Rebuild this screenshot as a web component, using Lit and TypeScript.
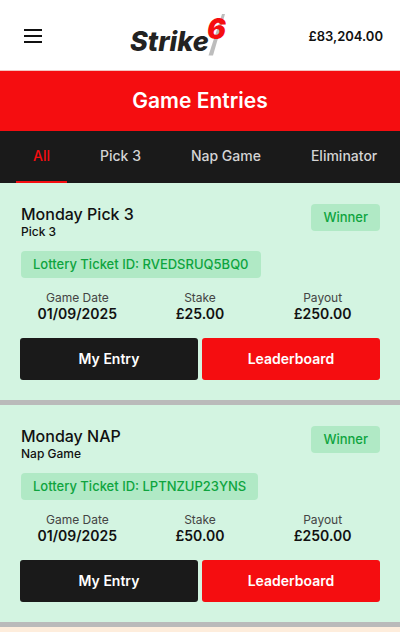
import { LitElement, html, css } from "lit";
import { customElement, property, state } from "lit/decorators.js";
import { classMap } from "lit/directives/class-map.js";

interface Entry {
  title: string;
  game: string;
  ticket: string;
  date: string;
  stake: string;
  payout: string;
}

const TABS = ["All", "Pick 3", "Nap Game", "Eliminator"];

const ENTRIES: Entry[] = [
  { title: "Monday Pick 3", game: "Pick 3", ticket: "RVEDSRUQ5BQ0", date: "01/09/2025", stake: "£25.00", payout: "£250.00" },
  { title: "Monday NAP", game: "Nap Game", ticket: "LPTNZUP23YNS", date: "01/09/2025", stake: "£50.00", payout: "£250.00" },
];

@customElement("site-header")
class SiteHeader extends LitElement {
  static styles = css`
    :host {
      display: block;
      background: #fff;
      border-bottom: 1px solid #f3c4c0;
    }
    .bar {
      display: flex;
      justify-content: space-between;
      align-items: center;
      padding: 12px 17px 10px 20px;
    }
    .menu {
      display: flex;
      padding: 4px;
      border: 0;
      background: none;
    }
    .logo {
      display: block;
    }
    .word {
      font: italic 800 27px Inter, sans-serif;
      fill: #222;
    }
    .six {
      font: italic 900 28px Inter, sans-serif;
      fill: #f50d10;
    }
    .balance {
      font-size: 13px;
      font-weight: 600;
      line-height: 20px;
    }
  `;

  @property() balance = "";

  render() {
    return html`
      <header class="bar">
        <button class="menu" aria-label="Menu">
          <svg width="18" height="16" viewBox="0 0 18 16" stroke="#111" stroke-width="2">
            <path d="M0 2H18M0 8H18M0 14H18" />
          </svg>
        </button>
        <svg class="logo" width="98" height="48" viewBox="0 0 98 48" role="img" aria-label="Strike 6">
          <path d="M94 2H97L85 43.500H80.500Z" fill="#bdbdbd" />
          <text class="word" x="2" y="39">Strike</text>
          <text class="six" x="79" y="27">6</text>
        </svg>
        <span class="balance">${this.balance}</span>
      </header>
    `;
  }
}

@customElement("game-tabs")
class GameTabs extends LitElement {
  static styles = css`
    :host {
      display: block;
      background: #1a1a1a;
      overflow: hidden;
    }
    .tabs {
      display: flex;
      gap: 16px;
      padding: 0 16px;
    }
    .tab {
      flex: none;
      height: 52px;
      padding: 0 17px;
      border: 0;
      border-bottom: 2px solid transparent;
      background: none;
      color: #d4d4d4;
      font: 500 14px/20px Inter, sans-serif;
    }
    .active {
      color: #f50d10;
      border-bottom-color: #f50d10;
    }
  `;

  @state() selected = "All";

  render() {
    return html`
      <div class="tabs" role="tablist">
        ${TABS.map(
          (tab) => html`<button
            role="tab"
            aria-selected=${tab === this.selected}
            class=${classMap({ tab: true, active: tab === this.selected })}
            @click=${() => (this.selected = tab)}
          >${tab}</button>`
        )}
      </div>
    `;
  }
}

@customElement("entry-card")
class EntryCard extends LitElement {
  static styles = css`
    :host {
      display: block;
      padding: 21px 20px 20px;
      background: #d3f4e1;
      border-bottom: 5px solid #bababa;
    }
    .top {
      display: flex;
      justify-content: space-between;
      align-items: flex-start;
      padding-left: 1px;
    }
    .title,
    .game {
      margin: 0;
      font-weight: 500;
    }
    .title {
      font-size: 16px;
      line-height: 20px;
    }
    .game {
      font-size: 12px;
      line-height: 16px;
    }
    .tag {
      display: inline-block;
      padding: 0 12px;
      border-radius: 4px;
      background: #b0e9c5;
      color: #0ea43e;
      font-size: 13px;
      font-weight: 500;
      line-height: 27px;
    }
    .ticket {
      margin: 11px 0 0 1px;
    }
    .stats {
      display: grid;
      grid-template-columns: repeat(3, 1fr);
      gap: 8px;
      margin: 12px 0 16px;
      text-align: center;
    }
    .label {
      color: #444;
      font-size: 12px;
      line-height: 16px;
    }
    .value {
      margin: 0;
      font-size: 14px;
      font-weight: 600;
      line-height: 16px;
    }
    .actions {
      display: grid;
      grid-template-columns: 1fr 1fr;
      gap: 4px;
    }
    .action {
      height: 42px;
      border: 0;
      border-radius: 3px;
      background: #1a1a1a;
      color: #fff;
      font: 600 14px/20px Inter, sans-serif;
    }
    .primary {
      background: #f50d10;
    }
  `;

  @property({ attribute: false }) entry!: Entry;

  render() {
    const e = this.entry;
    return html`
      <article>
        <div class="top">
          <div>
            <h2 class="title">${e.title}</h2>
            <p class="game">${e.game}</p>
          </div>
          <span class="tag">Winner</span>
        </div>
        <div class="tag ticket">Lottery Ticket ID: ${e.ticket}</div>
        <dl class="stats">
          <div><dt class="label">Game Date</dt><dd class="value">${e.date}</dd></div>
          <div><dt class="label">Stake</dt><dd class="value">${e.stake}</dd></div>
          <div><dt class="label">Payout</dt><dd class="value">${e.payout}</dd></div>
        </dl>
        <div class="actions">
          <button class="action">My Entry</button>
          <button class="action primary">Leaderboard</button>
        </div>
      </article>
    `;
  }
}

@customElement("app-root")
class AppRoot extends LitElement {
  static styles = css`
    :host {
      display: block;
      min-height: 100vh;
      background: #feeddc;
      color: #111;
      font-family: Inter, sans-serif;
    }
    .heading {
      margin: 0;
      padding: 16px;
      background: #f50d10;
      color: #fff;
      text-align: center;
      font-size: 21px;
      font-weight: 600;
      line-height: 28px;
    }
  `;

  render() {
    return html`
      <site-header balance="£83,204.00"></site-header>
      <main>
        <h1 class="heading">Game Entries</h1>
        <game-tabs></game-tabs>
        ${ENTRIES.map((entry) => html`<entry-card .entry=${entry}></entry-card>`)}
      </main>
    `;
  }
}
